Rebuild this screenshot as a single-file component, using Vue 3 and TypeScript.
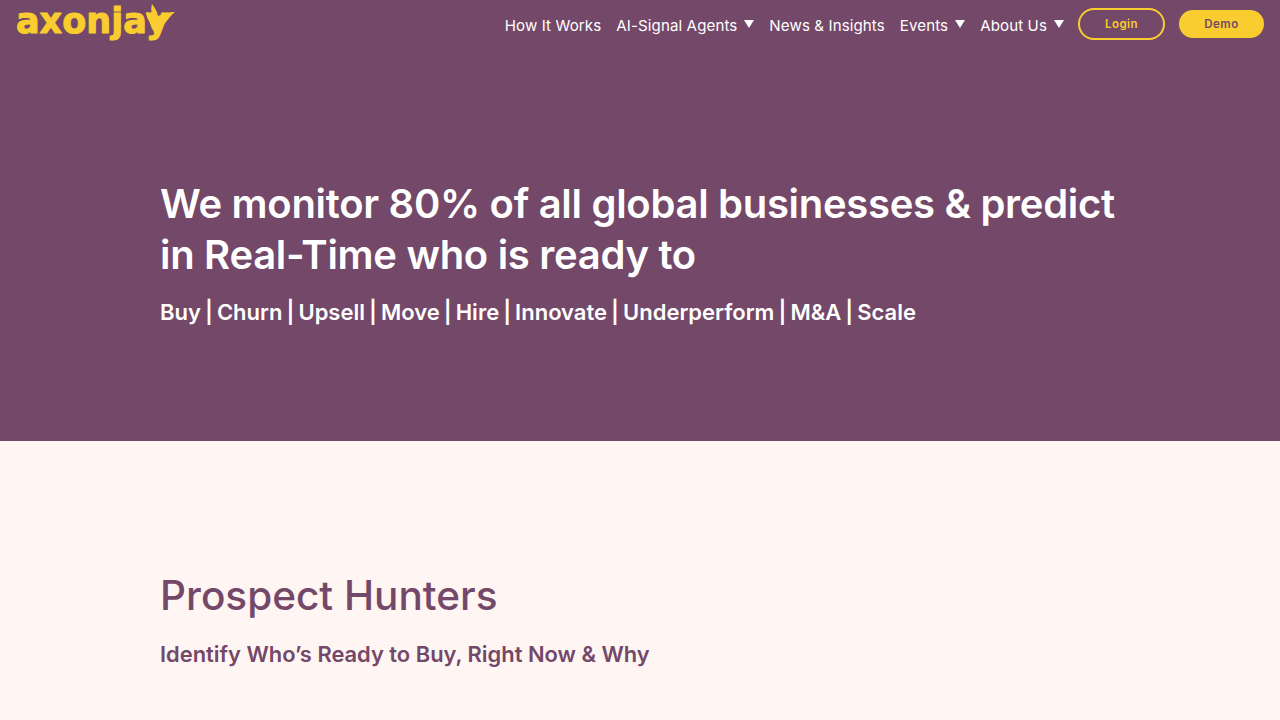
<script setup lang="ts">
const navItems = [
  { label: 'How It Works', caret: false },
  { label: 'AI-Signal Agents', caret: true },
  { label: 'News & Insights', caret: false },
  { label: 'Events', caret: true },
  { label: 'About Us', caret: true },
]
</script>

<template>
  <div class="page">
    <section class="hero">
      <header class="topbar">
        <svg class="logo" viewBox="0 0 160 44" width="160" height="44" aria-label="axonjay">
          <text x="0" y="31" class="logo-text">axonjay</text>
          <path d="M136 2 C139 6 141 9 142 14 C147 12 152 10 159 10 C155 13 153 16 150 20 L143 27 L136 27 L134 20 C131 17 130 13 131 10 C133 11 135 12 136 13 C135 9 135 5 136 2 Z" fill="#f9cd2f" />
        </svg>
        <nav class="nav">
          <a v-for="item in navItems" :key="item.label" class="nav-item">
            {{ item.label }}
            <svg v-if="item.caret" class="caret" viewBox="0 0 10 8" width="10" height="8"><path d="M0 0H10L5 8Z" fill="#fff" /></svg>
          </a>
          <button class="btn btn-login">Login</button>
          <button class="btn btn-demo">Demo</button>
        </nav>
      </header>
      <div class="hero-body">
        <h1>We monitor 80% of all global businesses &amp; predict in Real-Time who is ready to</h1>
        <p>Buy | Churn | Upsell | Move | Hire | Innovate | Underperform | M&amp;A | Scale</p>
      </div>
    </section>
    <section class="hunters">
      <h2>Prospect Hunters</h2>
      <p>Identify Who’s Ready to Buy, Right Now &amp; Why</p>
    </section>
  </div>
</template>

<style>
html, body { margin: 0; background: #fff5f2; }
</style>

<style scoped>
.page {
  font-family: Inter, "Noto Sans", sans-serif;
  height: 720px;
  overflow: hidden;
  background: #fff5f2;
}
.hero {
  height: 441px;
  background: #744868;
  color: #fff;
  box-sizing: border-box;
}
.topbar {
  display: flex;
  justify-content: space-between;
  align-items: flex-start;
  padding: 2px 16px 0;
}
.logo { display: block; overflow: visible; }
.logo-text {
  font-family: "DejaVu Sans", sans-serif;
  font-weight: 700;
  font-size: 35px;
  fill: #f9cd2f;
  stroke: #f9cd2f;
  stroke-width: 1px;
  stroke-linejoin: round;
}
.nav {
  display: flex;
  align-items: center;
  gap: 15px;
  padding-top: 6px;
}
.nav-item {
  font-size: 15.1px;
  letter-spacing: 0.1px;
  padding-top: 2px;
  display: flex;
  align-items: center;
  gap: 7px;
  color: #fff;
}
.caret { margin-top: -2px; }
.btn {
  font-family: inherit;
  font-size: 11.5px;
  font-weight: 600;
  letter-spacing: 0.5px;
  border-radius: 16px;
  box-sizing: border-box;
  cursor: pointer;
}
.btn-login {
  width: 87px;
  height: 32px;
  margin: 0 -1px;
  background: transparent;
  color: #f9cd2f;
  border: 2px solid #f9cd2f;
}
.btn-demo {
  width: 85px;
  height: 28px;
  background: #f9cd2f;
  color: #744868;
  border: none;
}
.hero-body {
  padding: 132px 160px 0;
}
.hero-body h1 {
  margin: 0;
  font-size: 40px;
  line-height: 51px;
  font-weight: 600;
  letter-spacing: -0.3px;
}
.hero-body p {
  margin: 17px 0 0;
  font-size: 22px;
  line-height: 30px;
  font-weight: 600;
  word-spacing: -1.5px;
}
.hunters {
  padding: 130px 160px 0;
  color: #744868;
}
.hunters h2 {
  margin: 0;
  font-size: 40.5px;
  line-height: 50px;
  font-weight: 500;
}
.hunters p {
  margin: 18px 0 0;
  font-size: 21.9px;
  line-height: 30px;
  font-weight: 600;
}
</style>
